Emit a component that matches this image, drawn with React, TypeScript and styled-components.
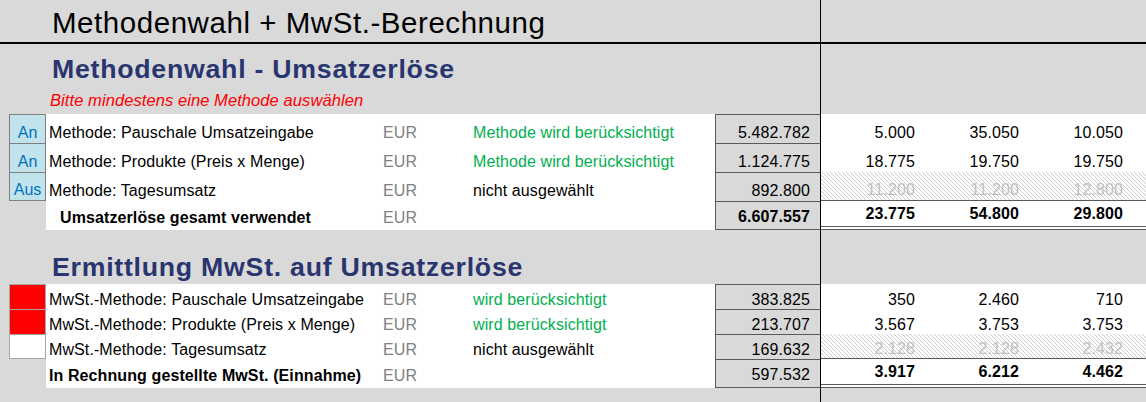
import styled, { createGlobalStyle } from "styled-components"

const GlobalStyle = createGlobalStyle`
  *, *::before, *::after { box-sizing: border-box; }
  html, body { margin: 0; padding: 0; background: #d9d9d9; }
  body { font-family: "Liberation Sans", Arial, sans-serif; color: #000; }
`

// toggle | label | unit | status | amount | rule | values
const COLS = "46px 337px 90px 242px 105px 1px 1fr"

interface RowData {
  toggle?: string
  fill?: string
  label: string
  status?: string
  active?: boolean
  amount: string
  values: string[]
  muted?: boolean
  total?: boolean
  boldAmount?: boolean
  indent?: boolean
  last?: boolean
}

const methodRows: RowData[] = [
  { toggle: "An", label: "Methode: Pauschale Umsatzeingabe", status: "Methode wird berücksichtigt", active: true, amount: "5.482.782", values: ["5.000", "35.050", "10.050"] },
  { toggle: "An", label: "Methode: Produkte (Preis x Menge)", status: "Methode wird berücksichtigt", active: true, amount: "1.124.775", values: ["18.775", "19.750", "19.750"] },
  { toggle: "Aus", label: "Methode: Tagesumsatz", status: "nicht ausgewählt", amount: "892.800", values: ["11.200", "11.200", "12.800"], muted: true, last: true },
  { label: "Umsatzerlöse gesamt verwendet", amount: "6.607.557", values: ["23.775", "54.800", "29.800"], total: true, boldAmount: true, indent: true },
]

const vatRows: RowData[] = [
  { fill: "#ff0000", label: "MwSt.-Methode: Pauschale Umsatzeingabe", status: "wird berücksichtigt", active: true, amount: "383.825", values: ["350", "2.460", "710"] },
  { fill: "#ff0000", label: "MwSt.-Methode: Produkte (Preis x Menge)", status: "wird berücksichtigt", active: true, amount: "213.707", values: ["3.567", "3.753", "3.753"] },
  { fill: "#ffffff", label: "MwSt.-Methode: Tagesumsatz", status: "nicht ausgewählt", amount: "169.632", values: ["2.128", "2.128", "2.432"], muted: true, last: true },
  { label: "In Rechnung gestellte MwSt. (Einnahme)", amount: "597.532", values: ["3.917", "6.212", "4.462"], total: true },
]

const App = () => {
  return (
    <>
      <GlobalStyle />
      <Sheet>
        <TitleBand>
          <Title>Methodenwahl + MwSt.-Berechnung</Title>
          <Rule />
        </TitleBand>

        <Band $h={70}>
          <HeadBlock $top={10}>
            <SectionHead>Methodenwahl - Umsatzerlöse</SectionHead>
            <Note>Bitte mindestens eine Methode auswählen</Note>
          </HeadBlock>
          <Rule />
        </Band>
        {methodRows.map((r, i) => (
          <DataRow key={i} row={r} height={29} toggleBorder="#808080" />
        ))}

        <Band $h={54}>
          <HeadBlock $top={22}>
            <SectionHead>Ermittlung MwSt. auf Umsatzerlöse</SectionHead>
          </HeadBlock>
          <Rule />
        </Band>
        {vatRows.map((r, i) => (
          <DataRow key={i} row={r} height={r.total ? 29 : 25} toggleBorder="#a6a6a6" />
        ))}

        <Filler>
          <Rule />
        </Filler>
      </Sheet>
    </>
  )
}

interface RowProps {
  row: RowData
  height: number
  toggleBorder: string
}

const DataRow: React.FC<RowProps> = ({ row, height, toggleBorder }) => {
  const pb = row.total ? 3 : height > 26 ? 1 : 0.5
  const hasToggle = row.toggle !== undefined || row.fill !== undefined
  return (
    <Band $h={height}>
      <ToggleSlot>
        {hasToggle && (
          <Toggle $fill={row.fill ?? "#c1e4ec"} $border={toggleBorder} $last={!!row.last} $pb={pb}>
            {row.toggle}
          </Toggle>
        )}
      </ToggleSlot>
      <Label $bold={!!row.total} $indent={!!row.indent} $pb={pb}>{row.label}</Label>
      <Unit $pb={pb}>EUR</Unit>
      <Status $active={!!row.active} $pb={pb}>{row.status}</Status>
      <Amount $bold={!!row.boldAmount} $bottom={!!row.total} $pb={pb}>
        {row.amount}
      </Amount>
      <Rule />
      <Values $muted={!!row.muted} $total={!!row.total}>
        {row.values.map((v, i) => (
          <Value key={i} $muted={!!row.muted} $bold={!!row.total} $pb={pb}>{v}</Value>
        ))}
        <span />
      </Values>
    </Band>
  )
}

export default App

const Sheet = styled.div`
  display: flex;
  flex-direction: column;
  min-height: 100vh;
  width: 1146px;
  overflow: hidden;
`

const Band = styled.div<{ $h: number }>`
  display: grid;
  grid-template-columns: ${COLS};
  height: ${(p) => p.$h}px;
  flex-shrink: 0;
`

const TitleBand = styled(Band).attrs({ $h: 44 })`
  border-bottom: 2px solid #000;
`

const Filler = styled.div`
  display: grid;
  grid-template-columns: ${COLS};
  flex: 1;
`

const Rule = styled.div`
  grid-column: 6;
  background: #000;
`

const Title = styled.div`
  grid-column: 1 / 6;
  padding: 8px 0 0 52px;
  font-size: 29.5px;
  letter-spacing: 0.55px;
  line-height: 30px;
  white-space: nowrap;
`

const HeadBlock = styled.div<{ $top: number }>`
  grid-column: 1 / 6;
  display: flex;
  flex-direction: column;
  padding-top: ${(p) => p.$top}px;
`

const SectionHead = styled.div`
  padding-left: 52px;
  font-size: 26.7px;
  font-weight: bold;
  letter-spacing: 0.75px;
  line-height: 30px;
  color: #29356f;
  white-space: nowrap;
`

const Note = styled.div`
  margin-top: 6px;
  padding-left: 50px;
  font-size: 16.5px;
  font-style: italic;
  letter-spacing: 0.08px;
  line-height: 20px;
  color: #ff0000;
`

const Cell = styled.div<{ $pb: number }>`
  display: flex;
  align-items: flex-end;
  font-size: 16px;
  letter-spacing: 0.1px;
  line-height: 18px;
  padding-bottom: ${(p) => p.$pb}px;
  white-space: nowrap;
  overflow: hidden;
`

const ToggleSlot = styled.div`
  grid-column: 1;
  padding-left: 9px;
  display: flex;
`

const Toggle = styled.div<{ $fill: string; $border: string; $last: boolean; $pb: number }>`
  flex: 1;
  display: flex;
  align-items: flex-end;
  justify-content: center;
  background: ${(p) => p.$fill};
  border: 1px solid ${(p) => p.$border};
  border-bottom: ${(p) => (p.$last ? `1px solid ${p.$border}` : "none")};
  color: #0070c0;
  font-size: 16px;
  line-height: 18px;
  padding-bottom: ${(p) => p.$pb}px;
`

const Label = styled(Cell)<{ $bold: boolean; $indent: boolean }>`
  grid-column: 2;
  background: #fff;
  padding-left: ${(p) => (p.$indent ? 14 : 3)}px;
  font-weight: ${(p) => (p.$bold ? "bold" : "normal")};
`

const Unit = styled(Cell)`
  grid-column: 3;
  background: #fff;
  color: #808080;
`

const Status = styled(Cell)<{ $active: boolean }>`
  grid-column: 4;
  background: #fff;
  color: ${(p) => (p.$active ? "#00b050" : "#000")};
`

const Amount = styled(Cell)<{ $bold: boolean; $bottom: boolean }>`
  grid-column: 5;
  justify-content: flex-end;
  padding-right: 10px;
  background: #d9d9d9;
  border-left: 1px solid #595959;
  border-top: 1px solid #595959;
  border-bottom: ${(p) => (p.$bottom ? "1px solid #595959" : "none")};
  font-weight: ${(p) => (p.$bold ? "bold" : "normal")};
`

const Values = styled.div<{ $muted: boolean; $total: boolean }>`
  grid-column: 7;
  display: grid;
  grid-template-columns: 98px 104px 104px 1fr;
  background: ${(p) =>
    p.$muted
      ? "repeating-linear-gradient(45deg, #cdcdcd 0 1px, #ffffff 1px 2.83px)"
      : "#fff"};
  border-bottom: ${(p) => (p.$muted ? "1px solid #595959" : p.$total ? "4px double #595959" : "none")};
`

const Value = styled(Cell)<{ $muted: boolean; $bold: boolean }>`
  justify-content: flex-end;
  padding-right: 4px;
  color: ${(p) => (p.$muted ? "#c0c0c0" : "#000")};
  font-weight: ${(p) => (p.$bold ? "bold" : "normal")};
`
